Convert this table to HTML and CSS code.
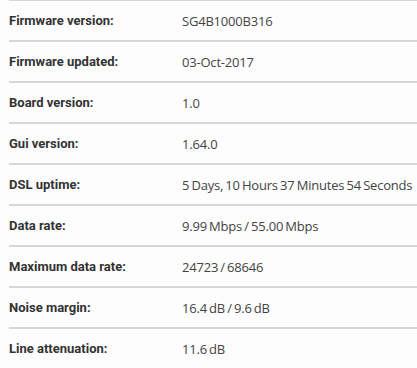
FILE: index.html
```html
<!DOCTYPE html>
<html lang="en">
<head>
    <meta charset="UTF-8">
    <title>Hub information</title>
    <link rel="stylesheet" href="styles.css">
</head>
<body>
    <div class="info">
        <div class="row"><span class="label">Firmware version:</span><span class="value">SG4B1000B316</span></div>
        <div class="row"><span class="label">Firmware updated:</span><span class="value">03-Oct-2017</span></div>
        <div class="row"><span class="label">Board version:</span><span class="value">1.0</span></div>
        <div class="row"><span class="label">Gui version:</span><span class="value">1.64.0</span></div>
        <div class="row"><span class="label">DSL uptime:</span><span class="value">5 Days, 10 Hours 37 Minutes 54 Seconds</span></div>
        <div class="row"><span class="label">Data rate:</span><span class="value">9.99 Mbps / 55.00 Mbps</span></div>
        <div class="row"><span class="label">Maximum data rate:</span><span class="value">24723 / 68646</span></div>
        <div class="row"><span class="label">Noise margin:</span><span class="value">16.4 dB / 9.6 dB</span></div>
        <div class="row"><span class="label">Line attenuation:</span><span class="value">11.6 dB</span></div>
    </div>
</body>
</html>
```

FILE: styles.css
```css
body {
    margin: 0;
    background-color: #fdfdfd;
    font-family: "Open Sans", "Liberation Sans", sans-serif;
}
.info {
    margin-top: -1px;
    padding-left: 9px;
}
.row {
    display: flex;
    align-items: center;
    height: 39px;
    border-top: 2px solid #d6d6d6;
}
.label {
    width: 173px;
    flex-shrink: 0;
    font-family: Roboto, sans-serif;
    font-weight: bold;
    font-size: 13px;
    color: #333;
}
.value {
    font-size: 13px;
    letter-spacing: -0.2px;
    word-spacing: -1px;
    color: #444;
    white-space: nowrap;
}
```
